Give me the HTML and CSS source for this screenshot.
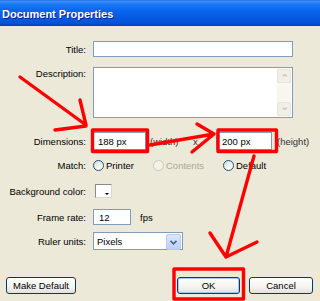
FILE: index.html
```html
<!DOCTYPE html>
<html lang="en">
<head>
    <meta charset="UTF-8">
    <title>Document Properties</title>
    <link rel="stylesheet" href="styles.css">
</head>
<body>
    <div class="window">
        <div class="titlebar">Document Properties</div>

        <div class="content">
            <div class="row row-title">
                <span class="label">Title:</span>
                <div class="field field-title"></div>
            </div>

            <div class="row row-desc">
                <span class="label">Description:</span>
                <div class="field field-desc">
                    <div class="scrollbar">
                        <div class="scroll-btn">&#8963;</div>
                        <div class="scroll-btn scroll-down">&#8964;</div>
                    </div>
                </div>
            </div>

            <div class="row row-dims">
                <span class="label">Dimensions:</span>
                <div class="field field-dim">188 px</div>
                <span class="dim-unit">(width)</span>
                <span class="dim-x">x</span>
                <div class="field field-dim2">200 px</div>
                <span class="dim-height">(height)</span>
            </div>

            <div class="row row-match">
                <span class="label">Match:</span>
                <div class="option option-printer"><span class="radio"></span>Printer</div>
                <div class="option option-contents disabled"><span class="radio"></span>Contents</div>
                <div class="option"><span class="radio"></span>Default</div>
            </div>

            <div class="row row-bg">
                <span class="label">Background color:</span>
                <div class="swatch"><span class="swatch-arrow"></span></div>
            </div>

            <div class="row row-rate">
                <span class="label">Frame rate:</span>
                <div class="field field-rate">12</div>
                <span class="fps">fps</span>
            </div>

            <div class="row row-ruler">
                <span class="label">Ruler units:</span>
                <div class="field select">Pixels
                    <span class="select-btn">
                        <svg width="7" height="5" viewBox="0 0 7 5"><path d="M0.5 0.8 L3.5 3.8 L6.5 0.8" fill="none" stroke="#4d6185" stroke-width="1.6"/></svg>
                    </span>
                </div>
            </div>
        </div>

        <div class="buttons">
            <button class="btn btn-default">Make Default</button>
            <button class="btn btn-ok">OK</button>
            <button class="btn btn-cancel">Cancel</button>
        </div>

        <!-- red annotations drawn over the dialog -->
        <svg class="marks" width="320" height="301" viewBox="0 0 320 301">
            <g fill="none" stroke="#f00" stroke-width="3.4" stroke-linecap="round" stroke-linejoin="round">
                <rect x="92.5" y="130" width="55" height="21.5"/>
                <rect x="218" y="130" width="58.5" height="21.5"/>
                <rect x="174" y="269" width="69.5" height="30"/>
                <path d="M20 77 L86 125 M80 100 L86 125 M55 130 L86 126"/>
                <path d="M150 145 L214 134 M197 124 L214 134 M192 152 L214 134"/>
                <path d="M254 156 L226 257 M210 233 L226 257 M257 242 L226 257"/>
            </g>
        </svg>
    </div>
</body>
</html>
```

FILE: styles.css
```css
body {
    margin: 0;
    font-family: "Liberation Sans", Arial, sans-serif;
    font-size: 9.5px;
    color: #000;
    background-color: #ECE9D8;
}

.window {
    position: relative;
    width: 320px;
    height: 301px;
    overflow: hidden;
    background-color: #ECE9D8;
}

.titlebar {
    height: 26px;
    padding-left: 2px;
    box-sizing: border-box;
    display: flex;
    align-items: center;
    padding-top: 1px;
    color: white;
    font-weight: bold;
    font-size: 11px;
    text-shadow: 1px 1px 0 #0a1e8c;
    background: linear-gradient(to bottom, #2a6fe8 0%, #3d8dfb 6%, #1b7cf8 15%, #0a66ec 40%, #055ae2 70%, #0452d8 90%, #0040b8 100%);
}

.content {
    display: flex;
    flex-direction: column;
}

.row {
    display: flex;
    align-items: center;
    gap: 7px;
}

.label {
    width: 86px;
    flex: none;
    text-align: right;
    line-height: 11px;
}

.field {
    box-sizing: border-box;
    background-color: white;
    border: 1px solid #7F9DB9;
    display: flex;
    align-items: center;
    padding-left: 4px;
}

.row-title {
    margin-top: 15px;
    height: 16px;
}
.field-title {
    width: 200px;
    height: 16px;
}

.row-desc {
    margin-top: 10px;
    height: 51px;
    align-items: flex-start;
}
.row-desc .label {
    padding-top: 1px;
}
.field-desc {
    position: relative;
    width: 200px;
    height: 51px;
}
.scrollbar {
    position: absolute;
    top: 1px;
    right: 1px;
    bottom: 1px;
    width: 14px;
    background-color: #F7F6F1;
    display: flex;
    flex-direction: column;
    justify-content: space-between;
}
.scroll-btn {
    height: 14px;
    box-sizing: border-box;
    border: 1px solid #E6E4DA;
    border-radius: 2px;
    background-color: #F1EFE6;
    color: #C2C0B4;
    font-size: 11px;
    line-height: 16px;
    text-align: center;
}
.scroll-down {
    line-height: 6px;
}

.row-dims {
    margin-top: 14px;
    height: 18px;
    gap: 0;
}
.row-dims .label {
    margin-right: 7px;
}
.field-dim {
    width: 53px;
    height: 18px;
    padding-left: 4px;
}
.dim-unit {
    width: 47px;
    padding-left: 4px;
    box-sizing: border-box;
    color: #333;
}
.dim-x {
    width: 23px;
    color: #333;
}
.field-dim2 {
    width: 56px;
    height: 18px;
    padding-left: 5px;
}
.dim-height {
    margin-left: 5px;
    color: #333;
}

.row-match {
    margin-top: 8px;
    height: 14px;
    gap: 0;
}
.row-match .label {
    margin-right: 7px;
}
.option {
    display: flex;
    align-items: center;
    gap: 2px;
}
.option-printer {
    width: 60px;
}
.option-contents {
    width: 70px;
}
.radio {
    width: 11px;
    height: 11px;
    box-sizing: border-box;
    border-radius: 50%;
    border: 1px solid #1C5180;
    background: linear-gradient(135deg, #dcdcd6 0%, #f4f4f0 60%, #fff 100%);
}
.disabled {
    color: #ACA899;
}
.disabled .radio {
    border-color: #CAC8BB;
    background: #F2F1EA;
}

.row-bg {
    margin-top: 12px;
    height: 14px;
}
.swatch {
    position: relative;
    margin-left: 2px;
    width: 17px;
    height: 14px;
    box-sizing: border-box;
    border: 1px solid #8A8A8A;
    border-right-color: #d8d8d8;
    border-bottom-color: #d8d8d8;
    background-color: white;
}
.swatch-arrow {
    position: absolute;
    right: 2px;
    bottom: 2px;
    border-left: 2px solid transparent;
    border-right: 2px solid transparent;
    border-top: 2px solid #000;
}

.row-rate {
    margin-top: 11px;
    height: 16px;
}
.field-rate {
    width: 38px;
    height: 16px;
    padding-left: 5px;
}
.fps {
    margin-left: 2px;
}

.row-ruler {
    margin-top: 7px;
    height: 18px;
}
.select {
    position: relative;
    width: 90px;
    height: 18px;
    padding-left: 3px;
}
.select-btn {
    position: absolute;
    top: 1px;
    right: 1px;
    width: 13px;
    height: 14px;
    border-radius: 2px;
    border: 1px solid #B7C9F2;
    background: linear-gradient(to bottom, #DCE7FD, #BCD0F8);
    display: flex;
    align-items: center;
    justify-content: center;
}

.buttons {
    margin-top: 27px;
    display: flex;
    padding: 0 7px 0 6px;
}
.btn {
    height: 17px;
    padding: 0;
    box-sizing: border-box;
    font-family: inherit;
    font-size: 9.5px;
    color: #000;
    border: 1px solid #003C74;
    border-radius: 3px;
    background: linear-gradient(to bottom, #FFFFFF 0%, #F4F3EE 60%, #E3E0D6 100%);
}
.btn-default {
    width: 70px;
}
.btn-ok {
    width: 63px;
    margin-left: auto;
    box-shadow: inset 0 0 0 1px #A9C5F0;
}
.btn-cancel {
    width: 64px;
    margin-left: 9px;
}

.marks {
    position: absolute;
    top: 0;
    left: 0;
    pointer-events: none;
}
```
